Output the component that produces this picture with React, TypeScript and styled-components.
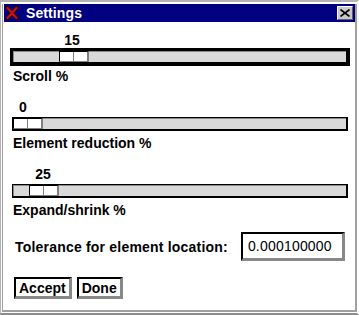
import React from "react";
import styled, { createGlobalStyle } from "styled-components";

const GlobalStyle = createGlobalStyle`
  html, body {
    margin: 0;
    padding: 0;
    background: #fff;
  }
  body {
    font-family: "Liberation Sans", Arial, sans-serif;
  }
`;

// Window frame
const Frame = styled.div`
  width: 359px;
  height: 315px;
  box-sizing: border-box;
  background: #fff;
  border-top: 2px solid #b4b4b4;
  border-left: 1px solid #b4b4b4;
  border-right: 2px solid #fff;
  border-bottom: 2px solid #8c8c8c;
  padding: 2px 0 1px 1px;
`;

const Inner = styled.div`
  height: 100%;
  box-sizing: border-box;
  border-left: 1px solid #a0a0a0;
  border-right: 2px solid #a0a0a0;
  border-bottom: 2px solid #a0a0a0;
  padding-left: 1px;
  display: flex;
  flex-direction: column;
`;

const TitleBar = styled.div`
  height: 18px;
  background: #000080;
  display: flex;
  align-items: center;
  padding: 0 2px 0 1px;
  color: #fff;
  font-weight: bold;
  font-size: 14px;
`;

const TitleText = styled.span`
  margin-left: 7px;
  flex: 1;
  line-height: 18px;
  letter-spacing: 0.1px;
`;

const CloseButton = styled.div`
  width: 16px;
  height: 14px;
  box-sizing: border-box;
  background: #c8c8c8;
  border-top: 1px solid #fff;
  border-left: 1px solid #fff;
  border-right: 1px solid #606060;
  border-bottom: 1px solid #606060;
  display: flex;
  align-items: center;
  justify-content: center;
`;

const Content = styled.div`
  flex: 1;
  padding-top: 10px;
  display: flex;
  flex-direction: column;
`;

const ScaleBlock = styled.div`
  display: flex;
  flex-direction: column;
  margin-bottom: 15px;
`;

const ValueRow = styled.div`
  position: relative;
  height: 16px;
  font-size: 14px;
  font-weight: bold;
  line-height: 16px;
  color: #000;
`;

const Value = styled.span`
  position: absolute;
  top: 0;
  transform: translateX(-50%);
`;

const Ring = styled.div<{ $focus?: boolean }>`
  margin: 0 5px 0 6px;
  padding: 2px;
  background: ${({ $focus }) => ($focus ? "#000" : "transparent")};
`;

const Track = styled.div`
  position: relative;
  height: 14px;
  box-sizing: border-box;
  background: #d9d9d9;
  border-top: 1px solid #000;
  border-left: 1px solid #000;
  border-right: 2px solid #000;
  border-bottom: 2px solid #000;
  box-shadow: inset 1px 1px 0 #8a8a8a;
`;

const Thumb = styled.div`
  position: absolute;
  top: 0;
  width: 30px;
  height: 11px;
  display: flex;
  box-sizing: border-box;
  border-top: 1px solid #000;
  border-left: 1px solid #000;
  border-right: 2px solid #808080;
  border-bottom: 1px solid #808080;
`;

const ThumbCell = styled.div<{ $first?: boolean }>`
  flex: 1;
  background: #fff;
  border-right: ${({ $first }) => ($first ? "1px solid #808080" : "none")};
`;

const Caption = styled.div`
  margin-top: 2px;
  padding-left: 9px;
  font-size: 14px;
  line-height: 16px;
  font-weight: bold;
  color: #000;
`;

const ToleranceRow = styled.div`
  display: flex;
  align-items: center;
  padding-left: 11px;
  margin-top: -1px;
`;

const Label = styled.span`
  font-size: 14px;
  font-weight: bold;
  color: #000;
  letter-spacing: 0.2px;
`;

const Field = styled.div`
  margin-left: 13px;
  width: 104px;
  height: 29px;
  box-sizing: border-box;
  border-top: 2px solid #000;
  border-left: 2px solid #000;
  border-right: 3px solid #888;
  border-bottom: 3px solid #888;
  padding-left: 5px;
  display: flex;
  align-items: center;
  font-size: 14px;
  letter-spacing: 0.2px;
  color: #000;
`;

const ButtonRow = styled.div`
  display: flex;
  gap: 5px;
  padding-left: 10px;
  margin-top: 16px;
`;

const Button = styled.button`
  height: 22px;
  box-sizing: border-box;
  background: #fff;
  border-top: 2px solid #000;
  border-left: 2px solid #000;
  border-right: 3px solid #888;
  border-bottom: 3px solid #888;
  border-radius: 0;
  padding: 0 3px;
  font-family: "Liberation Sans", Arial, sans-serif;
  font-size: 14px;
  font-weight: bold;
  color: #000;
  line-height: 16px;
`;

type ScaleProps = {
  value: number;
  thumbLeft: number;
  labelLeft: number;
  caption: string;
  focus?: boolean;
};

const Scale: React.FC<ScaleProps> = ({ value, thumbLeft, labelLeft, caption, focus }) => (
  <ScaleBlock>
    <ValueRow>
      <Value style={{ left: labelLeft }}>{value}</Value>
    </ValueRow>
    <Ring $focus={focus}>
      <Track>
        <Thumb style={{ left: thumbLeft }}>
          <ThumbCell $first />
          <ThumbCell />
        </Thumb>
      </Track>
    </Ring>
    <Caption>{caption}</Caption>
  </ScaleBlock>
);

const TkIcon = () => (
  <svg width="14" height="14" viewBox="0 0 14 14">
    <path d="M2 1.5 L12 12.5 M12 1.5 L2 12.5" stroke="#300" strokeWidth="3.6" strokeLinecap="round" />
    <path d="M2.5 2 L11.5 12 M11.5 2 L2.5 12" stroke="#d01010" strokeWidth="1.9" strokeLinecap="round" />
  </svg>
);

const CloseGlyph = () => (
  <svg width="10" height="8" viewBox="0 0 10 8">
    <path d="M0.5 0.5 L9.5 7.5 M9.5 0.5 L0.5 7.5" stroke="#000" strokeWidth="1.6" />
  </svg>
);

export default function App() {
  return (
    <>
      <GlobalStyle />
      <Frame>
        <Inner>
          <TitleBar>
            <TkIcon />
            <TitleText>Settings</TitleText>
            <CloseButton>
              <CloseGlyph />
            </CloseButton>
          </TitleBar>
          <Content>
            <Scale value={15} thumbLeft={46} labelLeft={68} caption="Scroll %" focus />
            <Scale value={0} thumbLeft={0} labelLeft={19} caption="Element reduction %" />
            <Scale value={25} thumbLeft={16} labelLeft={39} caption="Expand/shrink %" />
            <ToleranceRow>
              <Label>Tolerance for element location:</Label>
              <Field>0.000100000</Field>
            </ToleranceRow>
            <ButtonRow>
              <Button>Accept</Button>
              <Button>Done</Button>
            </ButtonRow>
          </Content>
        </Inner>
      </Frame>
    </>
  );
}
